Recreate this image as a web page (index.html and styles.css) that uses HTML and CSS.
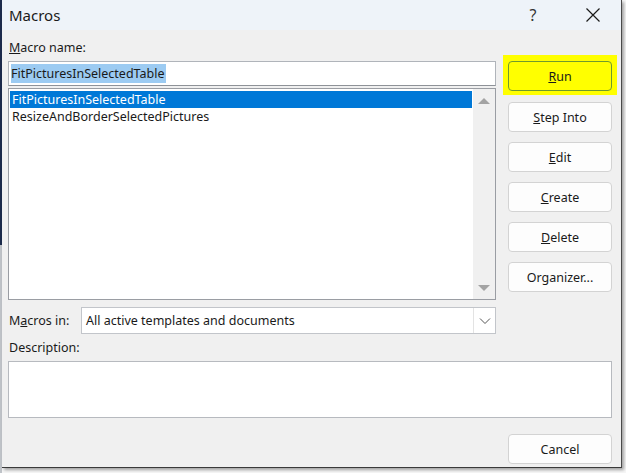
FILE: index.html
```html
<!DOCTYPE html>
<html lang="en">
<head>
<meta charset="UTF-8" />
<title>Macros</title>
<link rel="stylesheet" href="styles.css">
</head>
<body>
<div class="window">
  <div class="titlebar">
    <span class="title">Macros</span>
    <span class="help">?</span>
    <span class="close">
      <svg viewBox="0 0 16 16" width="16" height="16">
        <path d="M1.5 1.5 L14.5 14.5 M14.5 1.5 L1.5 14.5" stroke="#1a1a1a" stroke-width="1.2" fill="none" />
      </svg>
    </span>
  </div>

  <div class="content">
    <div class="top">
      <div class="left">
        <div class="label"><u>M</u>acro name:</div>
        <div class="name-input"><span class="sel-text">FitPicturesInSelectedTable</span></div>
        <div class="list">
          <div class="items">
            <div class="item selected">FitPicturesInSelectedTable</div>
            <div class="item">ResizeAndBorderSelectedPictures</div>
          </div>
          <div class="scrollbar">
            <span class="arrow up"></span>
            <span class="arrow down"></span>
          </div>
        </div>
        <div class="macros-in">
          <span class="label-in">M<u>a</u>cros in:</span>
          <div class="select">
            <span class="select-text">All active templates and documents</span>
            <span class="select-btn">
              <svg viewBox="0 0 12 8" width="12" height="8">
                <path d="M1 1.5 L6 6.5 L11 1.5" stroke="#555" stroke-width="1" fill="none" />
              </svg>
            </span>
          </div>
        </div>
      </div>

      <div class="right">
        <div class="highlight">
          <button class="btn default"><u>R</u>un</button>
        </div>
        <button class="btn"><u>S</u>tep Into</button>
        <button class="btn"><u>E</u>dit</button>
        <button class="btn"><u>C</u>reate</button>
        <button class="btn"><u>D</u>elete</button>
        <button class="btn">Organizer...</button>
      </div>
    </div>

    <div class="label desc-label">Description:</div>
    <div class="description"></div>

    <div class="footer">
      <button class="btn">Cancel</button>
    </div>
  </div>
</div>
</body>
</html>
```

FILE: styles.css
```css
body {
  margin: 0;
  width: 626px;
  height: 473px;
  overflow: hidden;
  font-family: "Noto Sans", "Open Sans", sans-serif;
  font-size: 12.5px;
  color: #1a1a1a;
  background: linear-gradient(to bottom, #1d2b4c 0, #1d2b4c 245px, #bfc3c8 245px) 0 0 / 2px 100% no-repeat, #f7f7f7;
}
.window {
  margin-left: 2px;
  width: 619px;
  height: 467px;
  background: #f0f0f0;
  border-right: 1px solid #4a4a4a;
  border-bottom: 1px solid #3a3a3a;
  box-shadow: 2px 2px 3px rgba(0, 0, 0, 0.35);
}
.titlebar {
  height: 30px;
  background: #eef3f9;
  display: flex;
  align-items: center;
  padding-left: 7px;
}
.title {
  font-size: 15px;
  flex: 1;
}
.help {
  font-size: 16px;
  width: 64px;
  text-align: center;
  color: #333;
}
.close {
  width: 56px;
  display: flex;
  justify-content: center;
}
.content {
  padding: 9px 0 0 6px;
}
.top {
  display: flex;
  gap: 7px;
}
.left {
  width: 488px;
}
.label {
  height: 18px;
  line-height: 18px;
  padding-left: 1px;
  margin-bottom: 4px;
}
.name-input {
  height: 25px;
  box-sizing: border-box;
  border: 1px solid #b0b4ba;
  border-bottom-color: #8e9298;
  background: #fff;
  padding: 2px 2px;
  display: flex;
  align-items: center;
}
.sel-text {
  background: #9ccbf2;
  line-height: 19px;
  padding-right: 1px;
}
.list {
  margin-top: 2px;
  height: 212px;
  box-sizing: border-box;
  border: 1px solid #9a9da3;
  background: #fff;
  display: flex;
}
.items {
  flex: 1;
  padding: 2px 1px;
}
.item {
  height: 17px;
  line-height: 17px;
  padding-left: 2px;
}
.item.selected {
  background: #0078d7;
  color: #fff;
}
.scrollbar {
  width: 22px;
  background: #f0f0f0;
  display: flex;
  flex-direction: column;
  justify-content: space-between;
  align-items: center;
  padding: 9px 0 8px;
}
.arrow {
  width: 0;
  height: 0;
  border-left: 6px solid transparent;
  border-right: 6px solid transparent;
}
.arrow.up {
  border-bottom: 6px solid #a3a3a3;
}
.arrow.down {
  border-top: 6px solid #a3a3a3;
}
.macros-in {
  margin-top: 7px;
  display: flex;
  align-items: center;
}
.label-in {
  width: 72px;
  padding-left: 1px;
}
.select {
  width: 415px;
  height: 27px;
  box-sizing: border-box;
  border: 1px solid #c2c5ca;
  background: #fff;
  display: flex;
  align-items: center;
}
.select-text {
  flex: 1;
  padding-left: 4px;
}
.select-btn {
  width: 21px;
  height: 25px;
  border-left: 1px solid #e3e3e3;
  display: flex;
  align-items: center;
  justify-content: center;
}
.right {
  padding-top: 16px;
  width: 114px;
  display: flex;
  flex-direction: column;
  align-items: center;
  gap: 10px;
}
.highlight {
  background: #ffff00;
  padding: 6px 5px 4px;
  margin-bottom: -3px;
}
.btn {
  width: 104px;
  height: 30px;
  box-sizing: border-box;
  border: 1px solid #d3d3d3;
  border-radius: 4px;
  background: #fdfdfd;
  font-family: inherit;
  font-size: 12.5px;
  color: #1a1a1a;
  padding: 0;
  display: block;
}
.btn.default {
  background: #ffff00;
  border-color: #6f9a2e;
}
.desc-label {
  margin-top: 5px;
}
.description {
  width: 604px;
  height: 57px;
  box-sizing: border-box;
  border: 1px solid #b7babf;
  background: #fff;
}
.footer {
  width: 604px;
  margin-top: 16px;
  display: flex;
  justify-content: flex-end;
}
```
